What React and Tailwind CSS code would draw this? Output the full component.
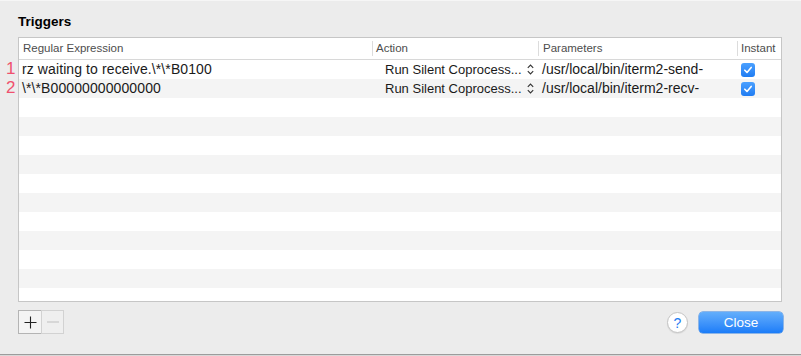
const rows = [
  { n: "1", re: "rz waiting to receive.\\*\\*B0100", action: "Run Silent Coprocess...", params: "/usr/local/bin/iterm2-send-" },
  { n: "2", re: "\\*\\*B00000000000000", action: "Run Silent Coprocess...", params: "/usr/local/bin/iterm2-recv-" },
]

const emptyRows = Array.from({ length: 11 }, (_, i) => i + 2)

function Check() {
  return (
    <span className="flex h-[14px] w-[14px] items-center justify-center rounded-[3px] bg-gradient-to-b from-[#4aa0ff] to-[#1f7cf2]">
      <svg width="10" height="10" viewBox="0 0 10 10">
        <path d="M1.8 5.2 L4 7.4 L8.2 2.4" fill="none" stroke="white" strokeWidth="1.6" strokeLinecap="round" strokeLinejoin="round" />
      </svg>
    </span>
  )
}

function Updown() {
  return (
    <svg width="7" height="11" viewBox="0 0 7 11" className="shrink-0">
      <path d="M0.8 3.8 L3.5 1 L6.2 3.8 M0.8 7.2 L3.5 10 L6.2 7.2" fill="none" stroke="#333" strokeWidth="1.1" />
    </svg>
  )
}

export default function App() {
  return (
    <div
      className="relative h-[356px] w-[801px] overflow-hidden border-t border-[#f6f6f6] bg-[#ececec] text-[#1a1a1a]"
      style={{ fontFamily: '"Liberation Sans", Arial, sans-serif' }}
    >
      <div className="px-[18px] pt-[13px] text-[13.5px] font-bold leading-[16px] text-black">Triggers</div>

      <div className="mt-[7px] flex">
        {/* row numbers */}
        <div className="w-[18px] pt-[22px]">
          {rows.map((r) => (
            <div key={r.n} className="h-[19px] pl-[6px] text-[17px] leading-[19px] text-[#f0506e]">{r.n}</div>
          ))}
        </div>

        {/* table */}
        <div className="h-[265px] w-[764px] overflow-hidden border border-[#c6c6c6] bg-white">
          <div className="flex h-[22px] border-b border-[#d8d8d8] text-[11.5px] leading-[21px] text-[#4d4d4d]">
            <div className="w-[353px] pl-[4px]">Regular Expression</div>
            <div className="my-[3px] w-px bg-[#dcdcdc]" />
            <div className="w-[165px] pl-[3px]">Action</div>
            <div className="my-[3px] w-px bg-[#dcdcdc]" />
            <div className="w-[198px] pl-[4px]">Parameters</div>
            <div className="my-[3px] w-px bg-[#dcdcdc]" />
            <div className="flex-1 pl-[3px]">Instant</div>
          </div>

          {rows.map((r, i) => (
            <div key={r.n} className={`flex h-[19px] items-center text-[14px] ${i % 2 ? "bg-[#f4f4f4]" : "bg-white"}`}>
              <div className="w-[354px] pl-[3px] tracking-[0.1px]">{r.re}</div>
              <div className="flex w-[166px] items-center gap-[5px] pl-[12px] text-[13px]">
                <span>{r.action}</span>
                <Updown />
              </div>
              <div className="w-[199px] pl-[3px]">{r.params}</div>
              <div className="flex flex-1 pl-[3px]">
                <Check />
              </div>
            </div>
          ))}

          {emptyRows.map((i) => (
            <div key={i} className={`h-[19px] ${i % 2 ? "bg-[#f4f4f4]" : "bg-white"}`} />
          ))}
        </div>
      </div>

      {/* bottom bar */}
      <div className="mt-[8px] flex items-start px-[18px]">
        <div className="flex">
          <button className="flex h-[24px] w-[24px] items-center justify-center border border-[#b4b4b4] bg-[#f4f4f4]">
            <svg width="13" height="13" viewBox="0 0 13 13">
              <path d="M6.5 0.5 V12.5 M0.5 6.5 H12.5" stroke="#222" strokeWidth="1.1" />
            </svg>
          </button>
          <button className="-ml-px flex h-[24px] w-[23px] items-center justify-center border border-[#d2d2d2] bg-[#efefef]">
            <svg width="12" height="2" viewBox="0 0 12 2">
              <path d="M0 1 H12" stroke="#c4c4c4" strokeWidth="1.1" />
            </svg>
          </button>
        </div>
        <div className="flex-1" />
        <button className="mr-[11px] mt-[2px] flex h-[21px] w-[21px] items-center justify-center rounded-full border border-[#c4c4c4] bg-white text-[14px] leading-none text-[#1d7cf2] shadow-[0_1px_1px_rgba(0,0,0,0.08)]">
          ?
        </button>
        <button className="mt-[2px] h-[21px] w-[84px] rounded-[4px] bg-gradient-to-b from-[#63aefb] to-[#1a7cf8] text-[13.5px] leading-[21px] text-white shadow-[0_0_0_0.5px_#2f7fe0]">
          Close
        </button>
      </div>

      <div className="absolute bottom-[1px] left-0 h-px w-full bg-[#9c9c9c]" />
      <div className="absolute bottom-0 left-0 h-px w-full bg-[#d8d8d8]" />
    </div>
  )
}
